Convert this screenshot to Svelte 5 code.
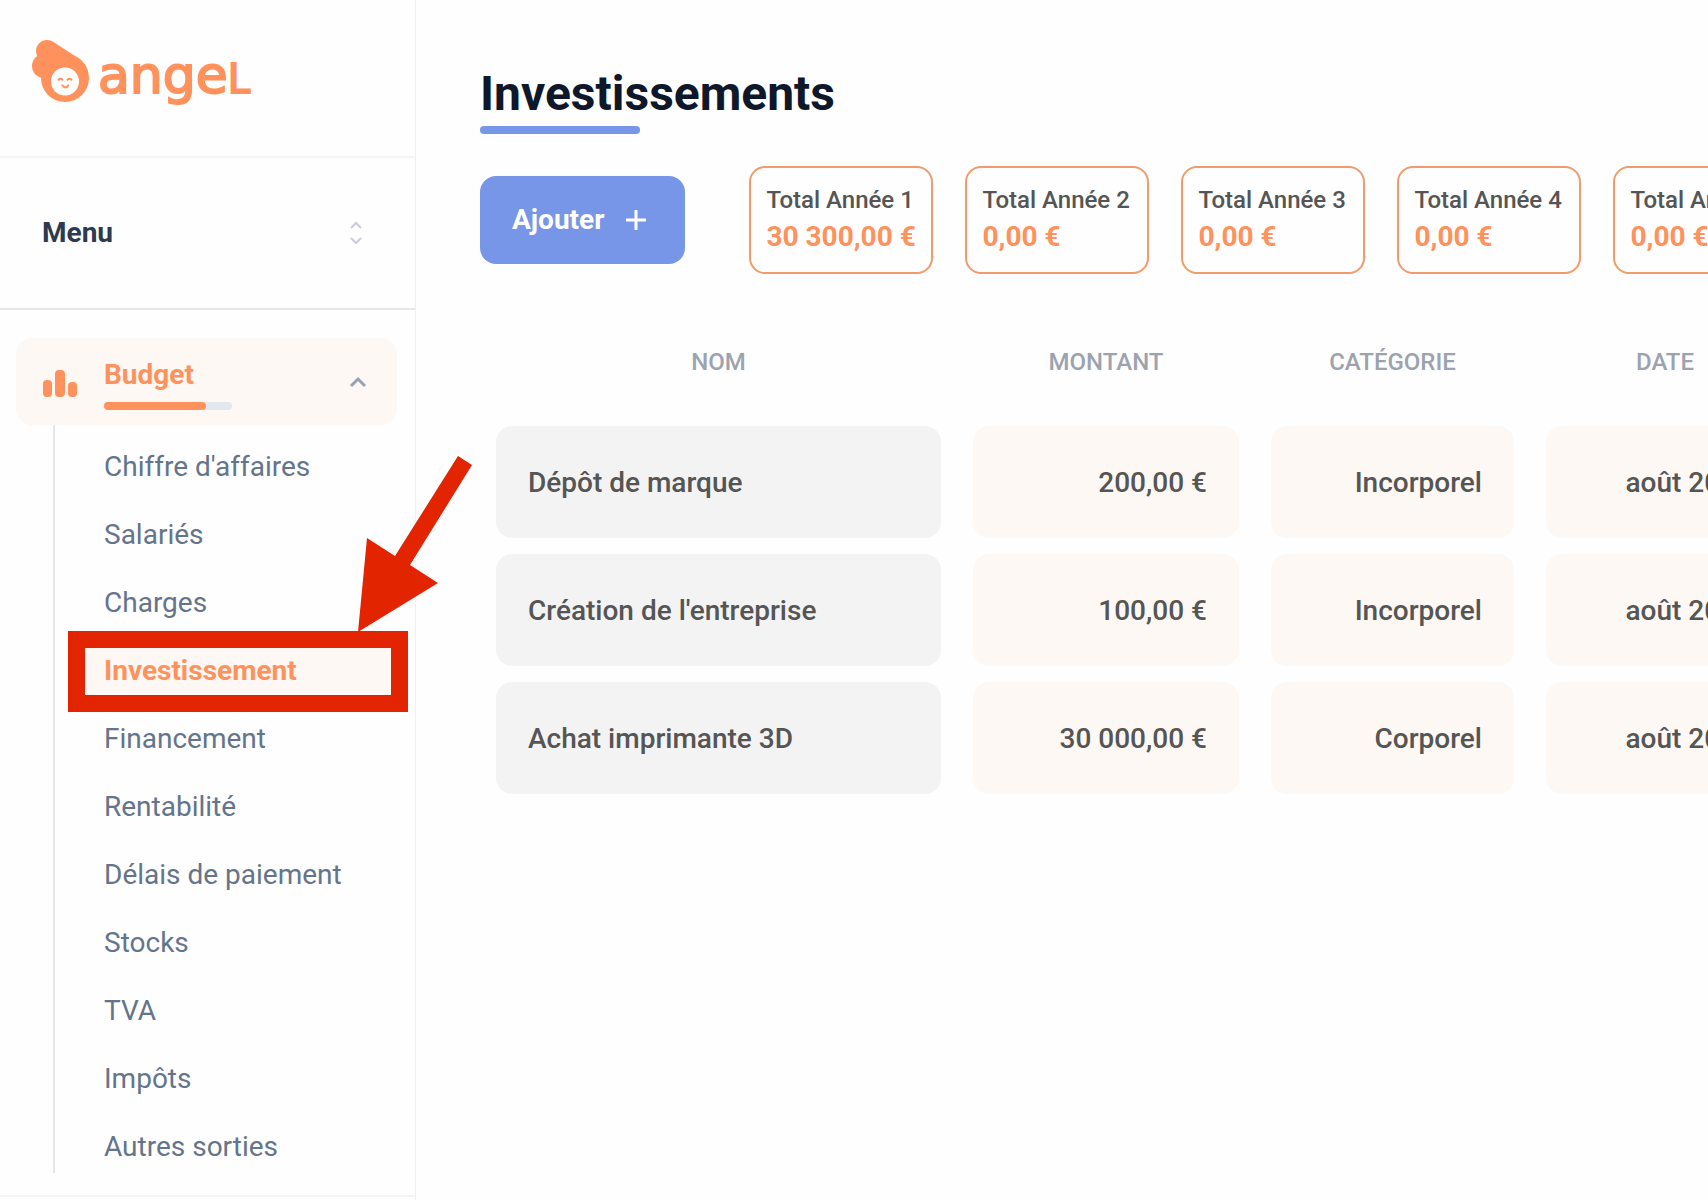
<script lang="ts">
	type Total = { label: string; amount: string };
	type Investment = { name: string; amount: string; category: string; date: string };

	const links = [
		"Chiffre d'affaires",
		'Salariés',
		'Charges',
		'Investissement',
		'Financement',
		'Rentabilité',
		'Délais de paiement',
		'Stocks',
		'TVA',
		'Impôts',
		'Autres sorties'
	];

	const totals: Total[] = [
		{ label: 'Total Année 1', amount: '30 300,00 €' },
		{ label: 'Total Année 2', amount: '0,00 €' },
		{ label: 'Total Année 3', amount: '0,00 €' },
		{ label: 'Total Année 4', amount: '0,00 €' },
		{ label: 'Total Année 5', amount: '0,00 €' }
	];

	const investments: Investment[] = [
		{ name: 'Dépôt de marque', amount: '200,00 €', category: 'Incorporel', date: 'août 2023' },
		{ name: "Création de l'entreprise", amount: '100,00 €', category: 'Incorporel', date: 'août 2023' },
		{ name: 'Achat imprimante 3D', amount: '30 000,00 €', category: 'Corporel', date: 'août 2023' }
	];

	let active = $state('Investissement');
	let open = $state(true);
	let progress = $state(80);
</script>

<div class="app">
	<aside class="sidebar">
		<a href="#accueil" class="brand">
			<svg class="mark" viewBox="32 39 58 64" width="58" height="64" aria-hidden="true">
				<g fill="#ff925c">
					<circle cx="47" cy="51" r="11" />
					<circle cx="44" cy="66" r="12" />
					<circle cx="65" cy="78" r="24" />
					<path d="M53 41.800 L79 58.500 Q86 64 88 72 L62 84 L41 78 L38 56 Z" />
				</g>
				<circle cx="65" cy="81.500" r="14" fill="#fff" />
				<g fill="none" stroke="#ff925c" stroke-width="2" stroke-linecap="round">
					<path d="M58.500 79.800 Q60.500 77.800 62.500 79.800" />
					<path d="M67.500 79.800 Q69.500 77.800 71.500 79.800" />
					<path d="M62.300 85.300 Q65.200 89.500 68.200 85.300" />
				</g>
			</svg>
			<span class="wordmark">ange<span class="wordmark-end">L</span></span>
		</a>

		<button class="menu">
			Menu
			<svg viewBox="0 0 14 26" width="14" height="26" aria-hidden="true">
				<path d="M2 8 L7 3 L12 8 M2 18 L7 23 L12 18" />
			</svg>
		</button>

		<nav>
			<button class="group" aria-expanded={open} onclick={() => (open = !open)}>
				<svg class="bars" viewBox="0 0 34 27" width="34" height="27" aria-hidden="true">
					<rect x="0" y="10" width="9" height="17" rx="4" />
					<rect x="12" y="0" width="10" height="27" rx="4" />
					<rect x="25" y="12" width="9" height="15" rx="4" />
				</svg>
				<span class="group-label">
					Budget
					<span class="progress"><span class="progress-fill" style="width: {progress}%"></span></span>
				</span>
				<svg class="chevron" class:closed={!open} viewBox="0 0 18 16" width="18" height="16" aria-hidden="true">
					<path d="M2 10 L9 3 L16 10" />
				</svg>
			</button>

			{#if open}
				<ul>
					{#each links as link (link)}
						<li>
							<a href="#budget" class:active={link === active} onclick={() => (active = link)}>{link}</a>
							{#if link === active}
								<span class="frame"></span>
								<svg class="arrow" viewBox="0 0 116 176" width="116" height="176" aria-hidden="true">
									<path d="M0 176 L9 82 L37 100 L100 0 L114 9 L52 109 L80 127 Z" />
								</svg>
							{/if}
						</li>
					{/each}
				</ul>
			{/if}
		</nav>
	</aside>

	<main>
		<h1>Investissements</h1>

		<div class="toolbar">
			<button class="btn-add">
				Ajouter
				<svg viewBox="0 0 20 20" width="20" height="20" aria-hidden="true">
					<path d="M10 1 V19 M1 10 H19" />
				</svg>
			</button>
			<div class="totals">
				{#each totals as t (t.label)}
					<div class="total">
						<span class="total-label">{t.label}</span>
						<strong>{t.amount}</strong>
					</div>
				{/each}
			</div>
		</div>

		<table>
			<colgroup>
				<col class="col-name" />
				<col class="col-amount" />
				<col class="col-category" />
				<col class="col-date" />
			</colgroup>
			<thead>
				<tr>
					<th>NOM</th>
					<th>MONTANT</th>
					<th>CATÉGORIE</th>
					<th>DATE</th>
				</tr>
			</thead>
			<tbody>
				{#each investments as inv (inv.name)}
					<tr>
						<td><div class="cell name">{inv.name}</div></td>
						<td><div class="cell">{inv.amount}</div></td>
						<td><div class="cell">{inv.category}</div></td>
						<td><div class="cell">{inv.date}</div></td>
					</tr>
				{/each}
			</tbody>
		</table>
	</main>
</div>

<style>
	:global(body) { background: #fefefe; overflow: hidden; }

	.app {
		display: flex;
		min-height: 100vh;
		font-family: Roboto, 'Liberation Sans', sans-serif;
		font-size: 28px;
		line-height: 36px;
	}
	button { font: inherit; border: none; cursor: pointer; text-align: left; }
	a { text-decoration: none; }

	.sidebar {
		flex: none;
		box-sizing: border-box;
		width: 416px;
		border-right: 1px solid #eef0f3;
	}

	.brand {
		display: flex;
		align-items: flex-start;
		gap: 8px;
		padding: 39px 32px 53px;
		border-bottom: 2px solid #f3f4f6;
	}
	.wordmark {
		height: 64px;
		color: #ff925c;
		font-family: 'DejaVu Sans', sans-serif;
		font-size: 52px;
		line-height: 72px;
		-webkit-text-stroke: 2px #ff925c;
	}
	.wordmark-end { font-size: 40px; }

	.menu {
		display: flex;
		align-items: center;
		justify-content: space-between;
		width: 100%;
		padding: 57px 52px 57px 42px;
		background: none;
		border-bottom: 2px solid #e5e7eb;
		color: #2d3a4f;
		font-weight: 700;
	}
	.menu svg { fill: none; stroke: #cbcbe0; stroke-width: 2; }

	nav { padding: 28px 18px 22px 16px; border-bottom: 2px solid #f3f4f6; }

	.group {
		display: flex;
		align-items: center;
		width: 100%;
		padding: 19px 30px 15px 27px;
		border-radius: 16px;
		background: #fef8f4;
		color: #ff925c;
		font-weight: 700;
	}
	.bars { fill: #ff925c; }
	.group-label { flex: 1; padding-left: 27px; }
	.progress {
		display: block;
		width: 128px;
		height: 8px;
		margin-top: 9px;
		border-radius: 4px;
		background: #e2e8f0;
	}
	.progress-fill { display: block; height: 8px; border-radius: 4px; background: #ff925c; }
	.chevron { fill: none; stroke: #94a3b8; stroke-width: 3; }
	.chevron.closed { transform: rotate(180deg); }

	ul {
		display: flex;
		flex-direction: column;
		gap: 16px;
		list-style: none;
		margin: 0 0 0 37px;
		padding: 16px 0 0 16px;
		border-left: 2px solid #e5e7eb;
	}
	li { position: relative; }
	li a { display: block; padding: 8px 33px; color: #64748b; }
	li a.active { background: #fef8f4; color: #ff925c; font-weight: 700; }

	/* callout around the current entry */
	.frame {
		position: absolute;
		inset: -14px -11px -15px -3px;
		border: 17px solid #e22400;
		pointer-events: none;
		z-index: 1;
	}
	.arrow {
		position: absolute;
		right: -77px;
		bottom: 65px;
		fill: #e22400;
		pointer-events: none;
		z-index: 1;
	}

	main { flex: 1; min-width: 0; padding: 65px 0 0 64px; overflow: hidden; }

	h1 { margin: 0; color: #0f172a; font-size: 48px; line-height: 58px; font-weight: 700; }
	h1::after {
		content: '';
		display: block;
		width: 160px;
		height: 8px;
		margin-top: 3px;
		border-radius: 4px;
		background: #7896e8;
	}

	.toolbar { display: flex; align-items: center; gap: 64px; margin-top: 32px; }
	.btn-add {
		display: flex;
		flex: none;
		align-items: center;
		gap: 22px;
		padding: 26px 39px 26px 32px;
		border-radius: 16px;
		background: #7896e8;
		color: #fff;
		font-weight: 700;
	}
	.btn-add svg { fill: none; stroke: #fff; stroke-width: 3; stroke-linecap: round; }

	.totals { display: flex; gap: 32px; }
	.total {
		display: flex;
		flex: none;
		flex-direction: column;
		gap: 2px;
		box-sizing: border-box;
		min-width: 184px;
		padding: 15px 15px 17px;
		border: 2px solid #f09b6b;
		border-radius: 16px;
	}
	.total-label { color: #555; font-size: 24px; font-weight: 500; line-height: 34px; }
	.total strong { color: #ff925c; }

	table {
		min-width: 1320px;
		margin-top: 56px;
		border-collapse: collapse;
		table-layout: fixed;
	}
	.col-name { width: 477px; }
	.col-amount { width: 298px; }
	.col-category { width: 275px; }
	.col-date { width: 270px; }
	th {
		padding: 16px 16px 40px;
		color: #9ca3af;
		font-size: 24px;
		font-weight: 500;
		line-height: 32px;
	}
	td { padding: 8px 16px; }
	.cell {
		padding: 39px 32px 37px;
		border-radius: 16px;
		background: #fef8f4;
		color: #555;
		font-weight: 500;
		text-align: right;
	}
	.cell.name { background: #f3f3f3; text-align: left; }
</style>
